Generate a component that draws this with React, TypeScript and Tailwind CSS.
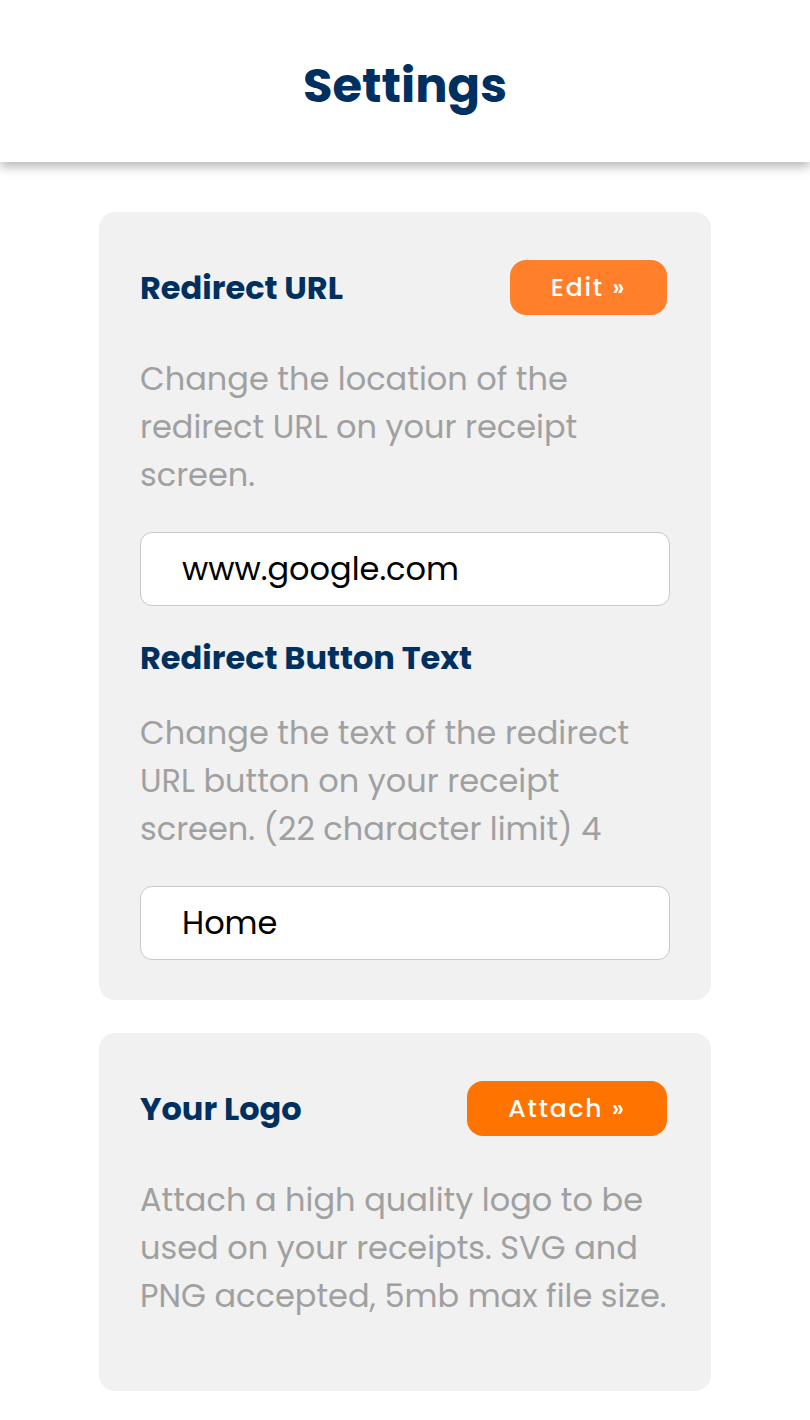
import React from 'react';

const font = "font-['Poppins','Open_Sans','Liberation_Sans',sans-serif]";

function SectionHeader({ title, action, color, width }: { title: string; action: string; color: string; width: string }) {
  return (
    <div className="flex items-center justify-between">
      <h2 className="text-[32px] font-bold leading-[40px] text-[#00305f]">{title}</h2>
      <button className={`mr-[3px] h-[55px] rounded-[16px] text-[25px] font-medium tracking-[1.8px] text-white ${color} ${width}`}>
        {action} »
      </button>
    </div>
  );
}

function TextField({ value }: { value: string }) {
  return (
    <div className="flex h-[74px] items-center rounded-[12px] border border-[#c8c8c8] bg-white pl-[41px] text-[32px] text-black">
      {value}
    </div>
  );
}

export default function App() {
  return (
    <div className={`min-h-screen bg-white ${font}`}>
      <header className="relative z-10 flex h-[162px] items-center justify-center bg-white pt-[9px] shadow-[0_5px_10px_rgba(0,0,0,0.28)]">
        <h1 className="text-[48px] font-bold text-[#00305f]">Settings</h1>
      </header>

      <main className="flex flex-col items-center gap-[33px] pt-[50px] pb-[29px]">
        <section className="w-[612px] rounded-[16px] bg-[#f1f1f1] px-[41px] pt-[48px] pb-[40px]">
          <SectionHeader title="Redirect URL" action="Edit" color="bg-[#ff7f2a]" width="w-[157px]" />
          <p className="mt-[40px] -mr-[8px] text-[32px] leading-[48px] text-[#a0a0a0]">
            Change the location of the redirect URL on your receipt screen.
          </p>
          <div className="mt-[33px]">
            <TextField value="www.google.com" />
          </div>

          <h2 className="mt-[32px] text-[32px] font-bold leading-[40px] text-[#00305f]">Redirect Button Text</h2>
          <p className="mt-[31px] -mr-[8px] text-[32px] leading-[48px] text-[#a0a0a0]">
            Change the text of the redirect URL button on your receipt screen. (22 character limit) 4
          </p>
          <div className="mt-[33px]">
            <TextField value="Home" />
          </div>
        </section>

        <section className="w-[612px] rounded-[16px] bg-[#f1f1f1] px-[41px] pt-[48px] pb-[71px]">
          <SectionHeader title="Your Logo" action="Attach" color="bg-[#ff7300]" width="w-[200px]" />
          <p className="mt-[40px] -mr-[8px] text-[32px] leading-[48px] text-[#a0a0a0]">
            Attach a high quality logo to be used on your receipts. SVG and PNG accepted, 5mb max file size.
          </p>
        </section>
      </main>
    </div>
  );
}
